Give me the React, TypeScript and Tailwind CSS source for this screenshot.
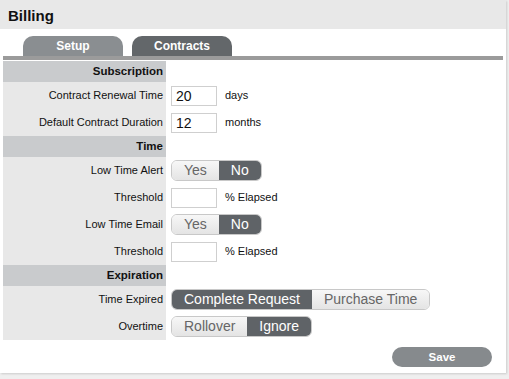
import React from "react";

const font = { fontFamily: '"Liberation Sans", Arial, sans-serif' };

const SectionHeader = ({ title }: { title: string }) => (
  <div className="flex h-[21px]">
    <div className="w-[163px] bg-[#c9cbcd] pr-[3px] text-right text-[11.5px] font-bold leading-[21px] text-[#111]">
      {title}
    </div>
    <div className="flex-1 bg-white" />
  </div>
);

const Row = ({ label, children }: { label: string; children: React.ReactNode }) => (
  <div className="flex h-[27px]">
    <div className="w-[163px] bg-[#e8e8e8] pr-[3px] text-right text-[11px] leading-[27px] text-[#111]">
      {label}
    </div>
    <div className="flex flex-1 items-center gap-[8px] pl-[5px] bg-white">{children}</div>
  </div>
);

const TextBox = ({ value = "" }: { value?: string }) => (
  <div className="h-[20px] w-[46px] border border-[#cfcfcf] bg-white pl-[4px] text-[14px] leading-[18px] text-[#111]">
    {value}
  </div>
);

const Toggle = ({ options, active }: { options: string[]; active: number }) => (
  <div className="flex h-[21px] overflow-hidden rounded-[6px] border border-[#c8c8c8] text-[14px] leading-[19px]">
    {options.map((o, i) =>
      i === active ? (
        <div key={o} className="bg-[#5f6367] px-[12px] text-white">
          {o}
        </div>
      ) : (
        <div
          key={o}
          className="bg-gradient-to-b from-[#f7f7f7] to-[#e4e4e4] px-[12px] text-[#666]"
        >
          {o}
        </div>
      )
    )}
  </div>
);

export default function App() {
  return (
    <div className="h-[379px] w-[509px] bg-[#efefef]" style={font}>
      <div className="h-[373px] w-[506px] bg-white shadow-[1px_1px_2px_rgba(0,0,0,0.15)]">
        <div className="h-[29px] bg-[#e8e8e8] pl-[8px] text-[15px] font-bold leading-[31px] text-[#111]">
          Billing
        </div>
        <div className="flex gap-[9px] pl-[23px] pt-[7px]">
          <div className="h-[20px] w-[100px] rounded-t-[10px] bg-[#8a8e91] text-center text-[12px] font-bold leading-[21px] text-white">
            Setup
          </div>
          <div className="h-[20px] w-[100px] rounded-t-[10px] bg-[#63676a] text-center text-[12px] font-bold leading-[21px] text-white">
            Contracts
          </div>
        </div>
        <div className="mx-[3px] h-[4px] bg-[#9b9b9b]" />
        <div className="ml-[3px] mt-[1px]">
          <SectionHeader title="Subscription" />
          <Row label="Contract Renewal Time">
            <TextBox value="20" />
            <span className="text-[11px] text-[#111]">days</span>
          </Row>
          <Row label="Default Contract Duration">
            <TextBox value="12" />
            <span className="text-[11px] text-[#111]">months</span>
          </Row>
          <SectionHeader title="Time" />
          <Row label="Low Time Alert">
            <Toggle options={["Yes", "No"]} active={1} />
          </Row>
          <Row label="Threshold">
            <TextBox />
            <span className="text-[11px] text-[#111]">% Elapsed</span>
          </Row>
          <Row label="Low Time Email">
            <Toggle options={["Yes", "No"]} active={1} />
          </Row>
          <Row label="Threshold">
            <TextBox />
            <span className="text-[11px] text-[#111]">% Elapsed</span>
          </Row>
          <SectionHeader title="Expiration" />
          <Row label="Time Expired">
            <Toggle options={["Complete Request", "Purchase Time"]} active={0} />
          </Row>
          <Row label="Overtime">
            <Toggle options={["Rollover", "Ignore"]} active={1} />
          </Row>
        </div>
        <div className="flex justify-end pr-[14px] pt-[7px]">
          <div className="h-[20px] w-[100px] rounded-full bg-[#868a8d] text-center text-[11.5px] font-bold leading-[20px] text-white">
            Save
          </div>
        </div>
      </div>
    </div>
  );
}
